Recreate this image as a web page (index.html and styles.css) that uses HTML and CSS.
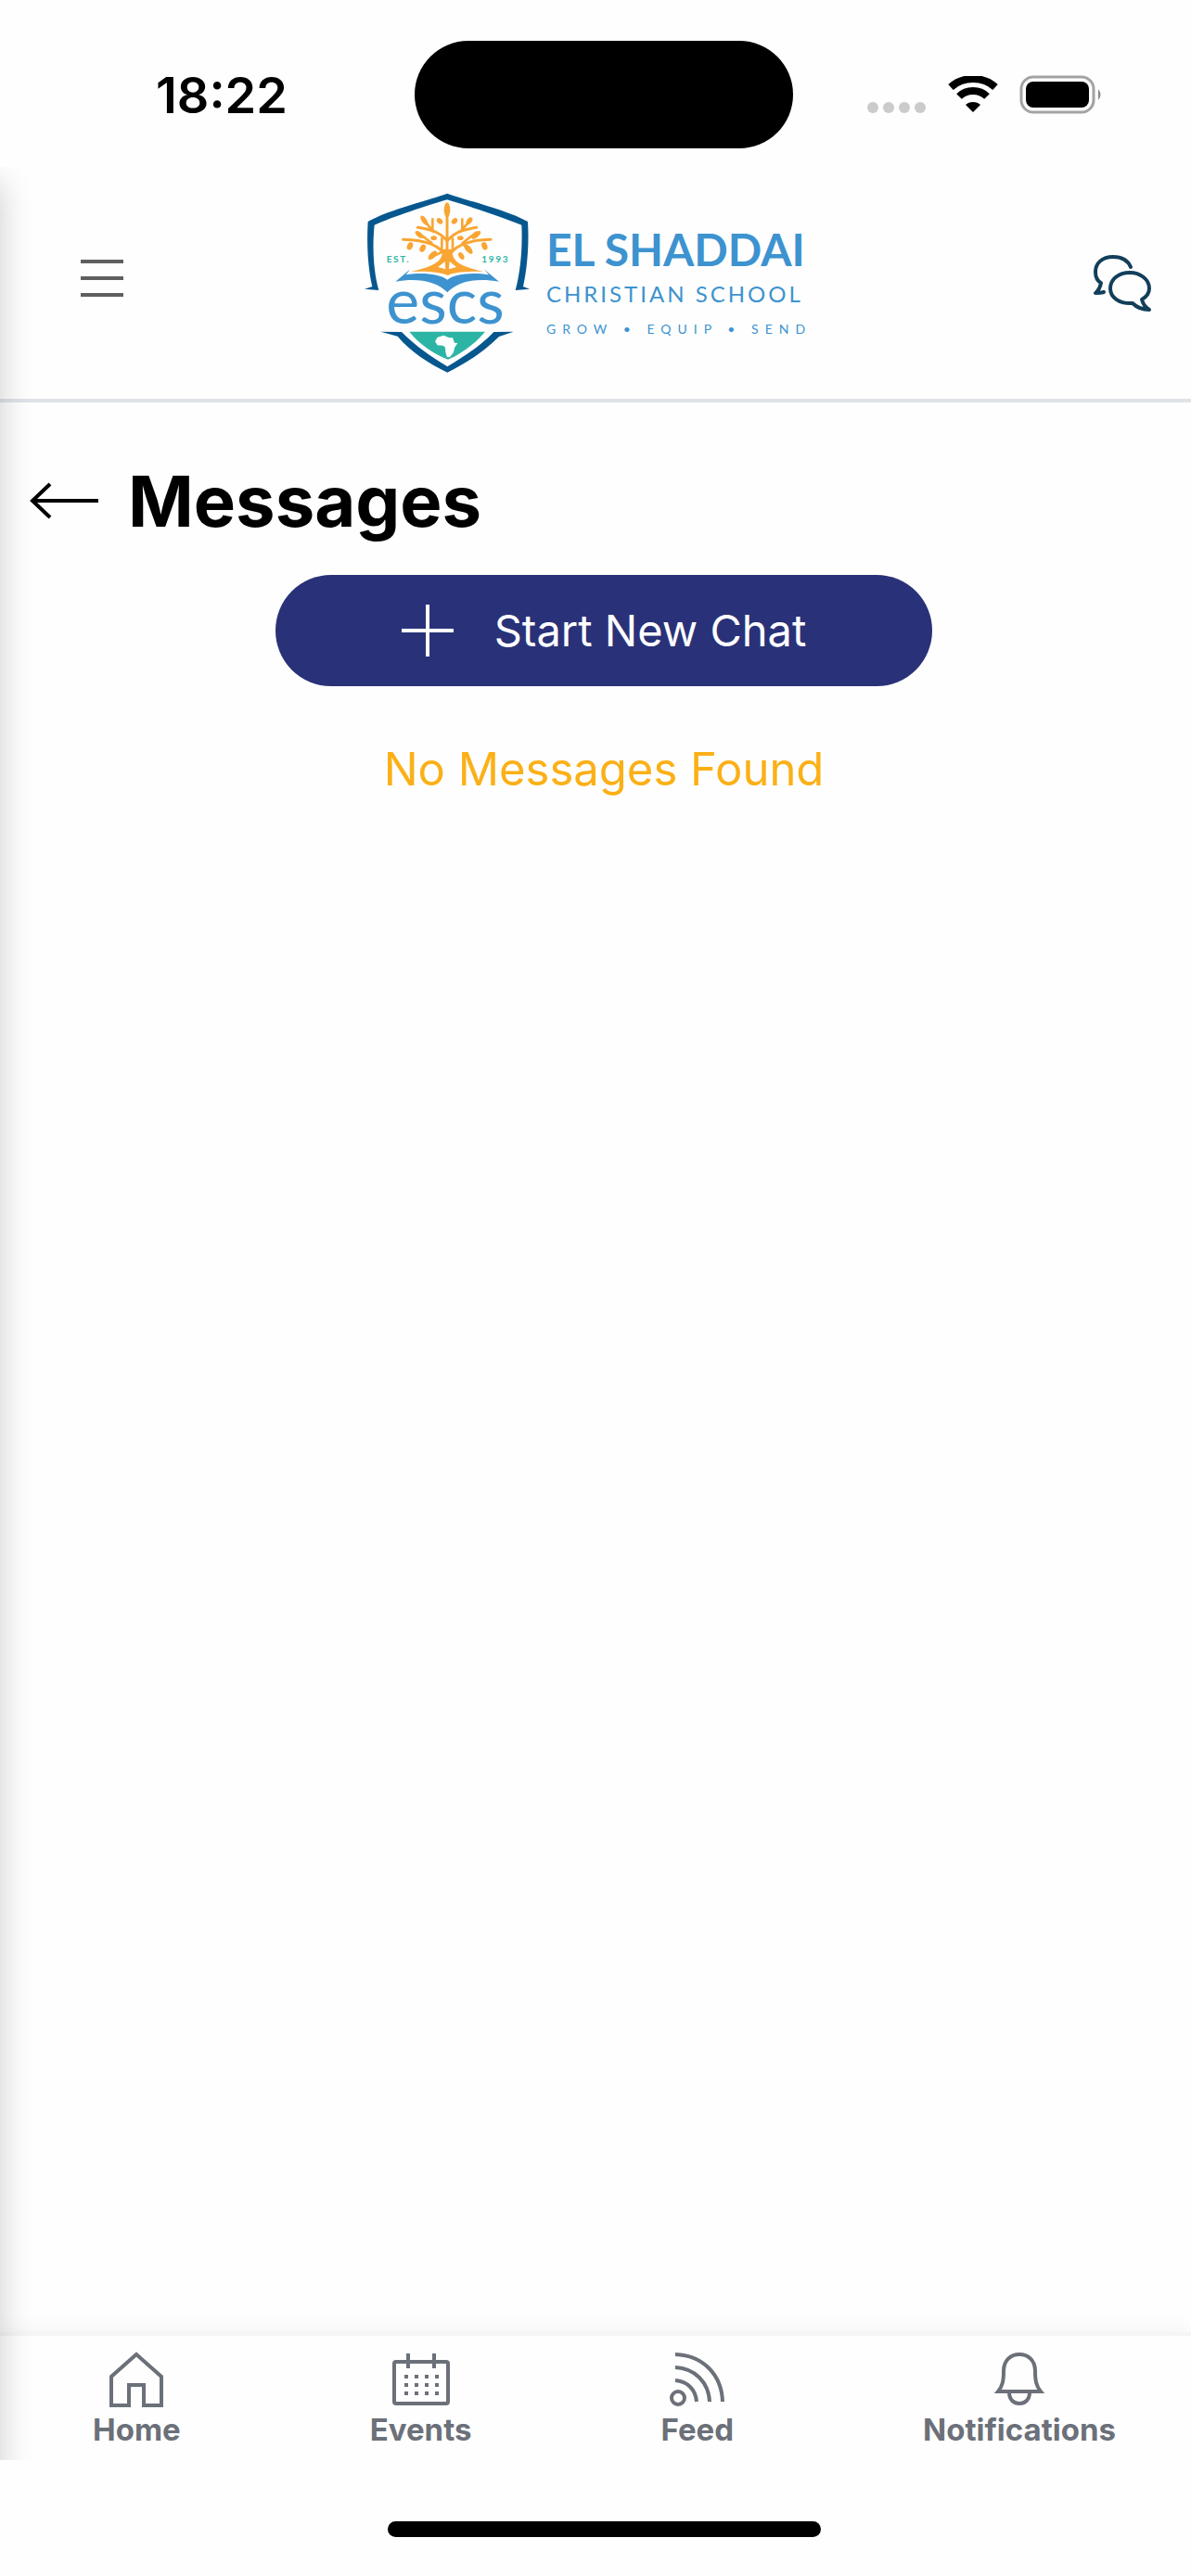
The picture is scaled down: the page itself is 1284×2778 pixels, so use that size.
FILE: index.html
```html
<!DOCTYPE html>
<html lang="en">
<head>
    <meta charset="UTF-8">
    <meta name="viewport" content="width=device-width, initial-scale=1.0">
    <title>Messages</title>
    <link rel="stylesheet" href="styles.css">
</head>
<body>
    <div class="status-bar">
        <span class="status-bar__time">18:22</span>
        <div class="status-bar__island"></div>
        <div class="status-bar__icons">
            <svg width="64" height="40" viewBox="0 0 64 40" fill="#cbcbcb">
                <circle cx="6" cy="34" r="6"/>
                <circle cx="23" cy="34" r="6"/>
                <circle cx="40" cy="34" r="6"/>
                <circle cx="57" cy="34" r="6"/>
            </svg>
            <svg width="56" height="40" viewBox="0 0 56 40">
                <path d="M4 12 C17 0 39 0 52 12" fill="none" stroke="#000" stroke-width="8"/>
                <path d="M13 22 C21 14 35 14 43 22" fill="none" stroke="#000" stroke-width="8"/>
                <path d="M20 31 C24 27 32 27 36 31 L28 39 Z"/>
            </svg>
            <svg width="90" height="42" viewBox="0 0 90 42">
                <rect x="2" y="2" width="78" height="38" rx="13" fill="none" stroke="#a3a3a3" stroke-width="3"/>
                <rect x="7" y="7" width="68" height="28" rx="8"/>
                <path d="M85 15 Q90 21 85 27 Z" fill="#8a8a8a"/>
            </svg>
        </div>
    </div>

    <div class="app">
        <header class="header">
            <button class="menu-btn" type="button" aria-label="Menu">
                <svg width="46" height="52" viewBox="0 0 46 52" stroke="#5f5f5f" stroke-width="4">
                    <path d="M0 3H46M0 21H46M0 39H46"/>
                </svg>
            </button>
            <a class="logo" href="#" aria-label="El Shaddai Christian School">
                <svg class="logo__shield" width="180" height="196" viewBox="40 37 540 588">
                    <!-- shield outline -->
                    <g fill="#07578f">
                        <path d="M307 42 C355 60 500 95 568 133 C573 210 565 290 553 343 L574 351 L528 355 C546 290 551 210 548 144 C485 118 375 82 307 62 C240 82 130 118 72 144 C65 210 68 290 86 355 L40 351 L65 343 C52 290 46 210 51 133 C115 95 260 60 307 42 Z"/>
                        <path d="M92 489 L160 490 C205 535 252 568 308 602 C360 570 410 540 458 490 L522 489 L475 505 C425 555 370 590 308 621 C245 590 190 555 147 504 Z"/>
                    </g>
                    <!-- tree -->
                    <g fill="none" stroke="#f9a533" stroke-linecap="round">
                        <path d="M307 85V240" stroke-width="9"/>
                        <path d="M307 195C285 170 265 160 212 152" stroke-width="9"/>
                        <path d="M307 195C330 170 350 160 402 152" stroke-width="9"/>
                        <path d="M305 250C285 205 230 192 165 191" stroke-width="9"/>
                        <path d="M310 250C330 205 385 192 448 191" stroke-width="9"/>
                        <path d="M262 165L240 138M260 160V125M350 165L374 138M356 160V125" stroke-width="8"/>
                        <path d="M257 202L212 168M290 220V188M357 202L402 168M325 220V188" stroke-width="8"/>
                        <path d="M298 228L252 250M358 205L385 233" stroke-width="8"/>
                    </g>
                    <g fill="#f9a533">
                        <path d="M290 222L324 222C322 255 335 275 425 295C370 292 325 298 309 307C290 298 245 292 190 295C280 275 295 255 290 222Z"/>
                        <ellipse cx="307" cy="95" rx="10" ry="24"/>
                        <ellipse cx="283" cy="131" rx="11" ry="8" transform="rotate(40 283 131)"/>
                        <ellipse cx="331" cy="131" rx="11" ry="8" transform="rotate(-40 331 131)"/>
                        <ellipse cx="233" cy="129" rx="8" ry="18" transform="rotate(-35 233 129)"/>
                        <ellipse cx="379" cy="131" rx="8" ry="13" transform="rotate(35 379 131)"/>
                        <ellipse cx="217" cy="175" rx="8" ry="16" transform="rotate(-50 217 175)"/>
                        <ellipse cx="401" cy="176" rx="8" ry="18" transform="rotate(50 401 176)"/>
                        <ellipse cx="187" cy="212" rx="9" ry="13" transform="rotate(25 187 212)"/>
                        <ellipse cx="228" cy="219" rx="9" ry="13" transform="rotate(25 228 219)"/>
                        <ellipse cx="260" cy="242" rx="9" ry="18" transform="rotate(45 260 242)"/>
                        <ellipse cx="264" cy="186" rx="10" ry="7"/>
                        <ellipse cx="350" cy="186" rx="10" ry="7"/>
                        <ellipse cx="353" cy="244" rx="8" ry="13" transform="rotate(-30 353 244)"/>
                        <ellipse cx="376" cy="222" rx="9" ry="18" transform="rotate(-40 376 222)"/>
                        <ellipse cx="428" cy="212" rx="9" ry="13" transform="rotate(-20 428 212)"/>
                    </g>
                    <path d="M300 262L278 280L302 287ZM315 262L337 280L313 287Z" fill="#fff"/>
                    <!-- open book -->
                    <path d="M140 327L188 287L174 305C225 296 285 302 308 321C330 302 390 296 442 305L426 287L475 327C410 315 345 322 308 362C270 322 205 315 140 327Z" fill="#3d93cf"/>
                    <text class="logo__year" x="111" y="266">EST.</text>
                    <text class="logo__year" x="419" y="266">1993</text>
                    <text class="logo__initials" x="301" y="463" text-anchor="middle">escs</text>
                    <!-- map of Africa -->
                    <path d="M185 489H430C400 525 355 560 310 579C262 560 215 528 185 489Z" fill="#2cb5a5"/>
                    <path d="M276 507L296 501L312 508L325 509L331 525L341 526L331 541L328 556L316 571L307 571L302 556L301 540L294 534L276 533L268 521Z" fill="#fff"/>
                </svg>
                <span class="logo__words">
                    <span class="logo__name">EL SHADDAI</span>
                    <span class="logo__type">CHRISTIAN SCHOOL</span>
                    <span class="logo__motto">GROW • EQUIP • SEND</span>
                </span>
            </a>
            <button class="chat-btn" type="button" aria-label="Chats">
                <svg width="66" height="64" viewBox="0 0 66 64" fill="none" stroke="#123f5a" stroke-width="4" stroke-linejoin="round" stroke-linecap="round">
                    <path d="M42 15C39 8 32 4 23 4C11 4 4 11 4 20C4 26 6 30 10 32C9 37 8 40 4 43C7 43 10 43 13 42"/>
                    <path d="M41 21C52 21 62 28 62 38C62 43 59 47 54 50C55 54 57 58 62 61C54 61 48 58 44 54C30 55 20 48 20 38C20 28 29 21 41 21Z"/>
                </svg>
            </button>
        </header>

        <main class="content">
            <div class="title-row">
                <button class="back-btn" type="button" aria-label="Back">
                    <svg width="74" height="40" viewBox="0 0 74 40" fill="none" stroke="#000" stroke-width="4">
                        <path d="M74 20H4M22 2L3 20L22 38"/>
                    </svg>
                </button>
                <h1 class="title">Messages</h1>
            </div>
            <div class="messages">
                <button class="new-chat-btn" type="button">
                    <svg width="56" height="56" viewBox="0 0 56 56" stroke="#fff" stroke-width="4">
                        <path d="M0 28H56M28 0V56"/>
                    </svg>
                    Start New Chat
                </button>
                <p class="messages__empty">No Messages Found</p>
            </div>
        </main>

        <nav class="tab-bar">
            <a class="tab-bar__link" href="#">
                <svg width="60" height="60" viewBox="0 0 60 60">
                    <path d="M30 3L57 27V58H38V36H22V58H3V27Z"/>
                </svg>
                Home
            </a>
            <a class="tab-bar__link" href="#">
                <svg width="64" height="60" viewBox="0 0 64 60">
                    <rect x="3" y="11" width="58" height="45" rx="2"/>
                    <path d="M18 2V18M46 2V18"/>
                    <path stroke-dasharray="4 7" d="M14 27H52M14 36H52M14 45H52"/>
                </svg>
                Events
            </a>
            <a class="tab-bar__link" href="#">
                <svg width="60" height="60" viewBox="0 0 60 60">
                    <circle cx="9" cy="50" r="7"/>
                    <path d="M6 31C19 32 28 41 29 54M6 17C27 18 42 33 43 54M6 3C36 4 56 25 57 54"/>
                </svg>
                Feed
            </a>
            <a class="tab-bar__link" href="#">
                <svg width="56" height="60" viewBox="0 0 56 60">
                    <path d="M5 43C10 37 11 31 11 21C11 10 18 3 28 3C38 3 45 10 45 21C45 31 46 37 51 43Z"/>
                    <path d="M17 44C17 52 22 56 28 56C34 56 39 52 39 44"/>
                </svg>
                Notifications
            </a>
        </nav>
    </div>

    <div class="home-bar">
        <div class="home-bar__indicator"></div>
    </div>
</body>
</html>
```
FILE: styles.css
```css
*{
    box-sizing: border-box;
}
body{
    display: flex;
    flex-direction: column;
    min-height: 100vh;
    margin: 0;
    background-color: #fefefe;
    color: #000;
    font-family: Inter, "Liberation Sans", sans-serif;
}
button{
    padding: 0;
    border: none;
    background: none;
    font-family: inherit;
    cursor: pointer;
}
svg{
    display: block;
}

/* status bar */
.status-bar{
    display: grid;
    grid-template-columns: 1fr auto 1fr;
    align-items: center;
    padding: 44px 0 20px 18px;
}
.status-bar__time{
    padding-left: 150px;
    font-size: 54px;
    font-weight: 600;
}
.status-bar__island{
    width: 408px;
    height: 116px;
    border-radius: 58px;
    background-color: #000;
}
.status-bar__icons{
    display: flex;
    align-items: center;
    gap: 22px;
    padding-left: 80px;
}

.app{
    position: relative;
    display: flex;
    flex-direction: column;
    flex: 1;
    overflow: hidden;
}
/* shadow of the closed side menu */
.app::before{
    content: "";
    position: absolute;
    top: 16px;
    bottom: -50px;
    left: -100px;
    width: 100px;
    box-shadow: 0 0 36px rgba(0,0,0,0.2);
    pointer-events: none;
    z-index: 1;
}

/* header */
.header{
    display: grid;
    grid-template-columns: 1fr auto 1fr;
    align-items: center;
    padding: 27px 41px 27px 25px;
    border-bottom: 4px solid #dfe3e7;
}
.menu-btn{
    justify-self: start;
    margin-left: 62px;
}
.chat-btn{
    justify-self: end;
}
.logo{
    display: flex;
    align-items: center;
    gap: 16px;
    color: #3d93cf;
    font-family: Lato, sans-serif;
    text-decoration: none;
}
.logo__words{
    display: flex;
    flex-direction: column;
    gap: 10px;
    padding-top: 4px;
    white-space: nowrap;
}
.logo__name{
    font-size: 48px;
    font-weight: 700;
    line-height: 48px;
}
.logo__type{
    font-size: 24px;
    line-height: 28px;
    letter-spacing: 3px;
}
.logo__motto{
    font-size: 14px;
    line-height: 28px;
    letter-spacing: 7px;
}
.logo__year{
    fill: #2cb5a5;
    font-size: 30px;
    font-weight: 700;
    letter-spacing: 5px;
}
.logo__initials{
    fill: #3d93cf;
    font-size: 204px;
}

/* page */
.content{
    flex: 1;
    padding: 56px 0 0 18px;
}
.title-row{
    display: flex;
    align-items: center;
    gap: 32px;
    padding-left: 14px;
}
.title{
    margin: 0;
    font-size: 76px;
    font-weight: 700;
    line-height: 100px;
}
.messages{
    display: flex;
    flex-direction: column;
    align-items: center;
    gap: 60px;
    padding-top: 30px;
}
.new-chat-btn{
    display: flex;
    align-items: center;
    justify-content: center;
    gap: 44px;
    width: 56%;
    padding: 32px;
    border-radius: 60px;
    background-color: #293278;
    color: #fff;
    font-size: 47px;
    line-height: 56px;
}
.messages__empty{
    margin: 0;
    color: #fbb017;
    font-size: 49px;
    line-height: 60px;
}

/* bottom tabs */
.tab-bar{
    display: flex;
    justify-content: space-between;
    padding: 17px 81px 13px 100px;
    border-top: 4px solid #f5f5f5;
    box-shadow: 0 0 24px rgba(0,0,0,0.06);
}
.tab-bar__link{
    display: flex;
    flex-direction: column;
    align-items: center;
    gap: 4px;
    color: #6b7079;
    font-size: 33px;
    font-weight: 700;
    line-height: 40px;
    text-decoration: none;
}
.tab-bar__link svg{
    fill: none;
    stroke: #6b7079;
    stroke-width: 4px;
}

.home-bar{
    display: flex;
    justify-content: center;
    padding: 66px 0 42px 18px;
}
.home-bar__indicator{
    width: 467px;
    height: 17px;
    border-radius: 9px;
    background-color: #000;
}
```
